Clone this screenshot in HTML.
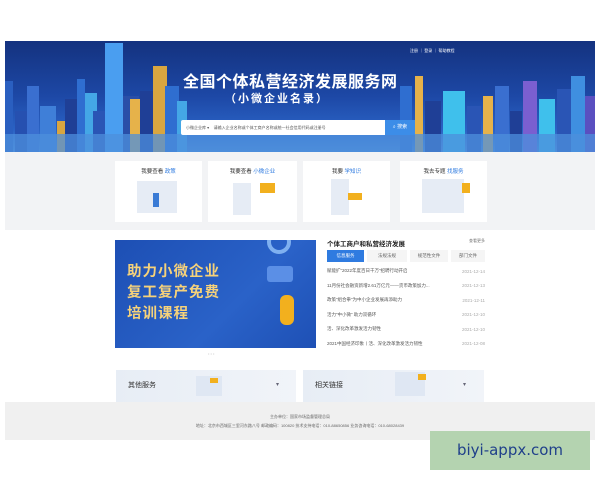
<!DOCTYPE html>
<html><head><meta charset="utf-8"><style>
*{margin:0;padding:0;box-sizing:border-box}
body{width:600px;height:480px;background:#fff;position:relative;overflow:hidden;font-family:"Liberation Sans","Noto Sans CJK SC",sans-serif}
.abs{position:absolute}
.banner{left:5px;top:41px;width:590px;height:111px;background:linear-gradient(180deg,#14327f 0%,#1d48a6 50%,#2a62c4 80%,#4b8ad6 100%);overflow:hidden}
.gray{left:5px;top:152px;width:590px;height:78px;background:#f2f3f5}
.card{top:161px;height:61px;background:#fff}
.card .t{position:absolute;top:6px;width:100%;text-align:center;font-size:5.5px;color:#333}
.card .t b{color:#2f7be0;font-weight:normal}
.news{left:327px;top:238px;width:158px}
.row{display:flex;justify-content:space-between;font-size:4.5px;color:#555;height:14.5px;align-items:center}
.row span:last-child{color:#aaa}
.foot{left:5px;top:402px;width:590px;height:38px;background:#f0f0f0;font-size:4px;color:#666;text-align:center}
</style></head><body>
<div class="abs banner">
 <svg width="590" height="111" style="position:absolute;left:0;top:0">
  <g fill="#2650b0">
   <rect x="0" y="40" width="8" height="71" fill="#2a5fc0"/><rect x="10" y="70" width="14" height="41"/><rect x="22" y="45" width="12" height="66" fill="#3a6fd0"/>
   <rect x="35" y="65" width="16" height="46" fill="#3f7fd8"/><rect x="52" y="80" width="12" height="31" fill="#d9a640"/>
   <rect x="60" y="58" width="12" height="53" fill="#1f3f96"/><rect x="72" y="38" width="8" height="73" fill="#2f6ed0"/>
   <rect x="80" y="52" width="12" height="59" fill="#44a7e6"/><rect x="88" y="70" width="12" height="41" fill="#2a55b5"/>
   <rect x="100" y="2" width="18" height="109" fill="#4a9ef0"/><rect x="118" y="55" width="16" height="56" fill="#2a4fa8"/>
   <rect x="125" y="58" width="10" height="53" fill="#e6b24a"/><rect x="135" y="50" width="14" height="61" fill="#1f3f96"/>
   <rect x="148" y="25" width="14" height="86" fill="#d9a640"/><rect x="160" y="45" width="14" height="66" fill="#2f6ed0"/>
   <rect x="172" y="60" width="10" height="51" fill="#44a7e6"/>
   <rect x="395" y="45" width="12" height="66" fill="#2f6ed0"/><rect x="410" y="35" width="8" height="76" fill="#e6b24a"/>
   <rect x="420" y="60" width="16" height="51" fill="#1f3f96"/><rect x="438" y="50" width="22" height="61" fill="#3fc0ec"/>
   <rect x="462" y="65" width="14" height="46" fill="#2a55b5"/><rect x="478" y="55" width="10" height="56" fill="#e6b24a"/>
   <rect x="490" y="45" width="14" height="66" fill="#3a6fd0"/><rect x="505" y="70" width="12" height="41" fill="#1f3f96"/>
   <rect x="518" y="40" width="14" height="71" fill="#7a5fd0"/><rect x="534" y="58" width="16" height="53" fill="#3fc0ec"/>
   <rect x="552" y="48" width="14" height="63" fill="#2a55b5"/><rect x="566" y="35" width="14" height="76" fill="#3f8fe0"/>
   <rect x="580" y="55" width="10" height="56" fill="#5a4fc0"/>
  </g>
  <rect x="0" y="93" width="590" height="18" fill="#4d8fdc" opacity=".75"/>
 </svg>
 <div class="abs" style="left:405px;top:7px;font-size:4px;color:#fff">注册 ｜ 登录 ｜ 帮助教程</div>
 <div class="abs" style="left:178px;top:27px;font-size:16px;font-weight:bold;color:#fff;letter-spacing:.5px">全国个体私营经济发展服务网</div>
 <div class="abs" style="left:220px;top:49px;font-size:11px;font-weight:bold;color:#fff;letter-spacing:2px">（小微企业名录）</div>
 <div class="abs" style="left:176px;top:79px;width:204px;height:15px;background:#fff;border-radius:2px 0 0 2px;font-size:4px;color:#555;line-height:15px;padding-left:5px">小微企业库 ▾ &nbsp;&nbsp; 请输入企业名称或个体工商户名称或统一社会信用代码或注册号</div>
 <div class="abs" style="left:380px;top:79px;width:30px;height:15px;background:#3c8de8;font-size:5px;color:#fff;line-height:15px;text-align:center">⌕ 搜索</div>
</div>
<div class="abs gray"></div>
<div class="abs card" style="left:115px;width:87px"><div class="t">我要查看 <b>政策</b></div><div class="abs" style="left:22px;top:20px;width:40px;height:32px;background:#e6ecf5"></div><div class="abs" style="left:38px;top:32px;width:6px;height:14px;background:#3a7bd5"></div></div>
<div class="abs card" style="left:208px;width:89px"><div class="t">我要查看 <b>小微企业</b></div><div class="abs" style="left:25px;top:22px;width:18px;height:32px;background:#e6ecf5"></div><div class="abs" style="left:52px;top:22px;width:15px;height:10px;background:#f2b01e"></div></div>
<div class="abs card" style="left:303px;width:87px"><div class="t">我要 <b>学知识</b></div><div class="abs" style="left:28px;top:18px;width:18px;height:36px;background:#e6ecf5"></div><div class="abs" style="left:45px;top:32px;width:14px;height:7px;background:#f2b01e"></div></div>
<div class="abs card" style="left:400px;width:87px"><div class="t">我去专题 <b>找服务</b></div><div class="abs" style="left:22px;top:18px;width:42px;height:34px;background:#e6ecf5"></div><div class="abs" style="left:62px;top:22px;width:8px;height:10px;background:#f2b01e"></div></div>

<div class="abs" style="left:115px;top:240px;width:201px;height:108px;background:linear-gradient(135deg,#1d4fb4,#2a62c8 60%,#1e50b5);overflow:hidden">
 <div class="abs" style="left:12px;top:22px;font-size:14.5px;font-weight:bold;color:#f6d27a;line-height:21px;letter-spacing:1px">助力小微企业<br>复工复产免费<br>培训课程</div>
 <div class="abs" style="left:152px;top:26px;width:26px;height:16px;background:#5b8fe6;border-radius:3px"></div>
 <div class="abs" style="left:165px;top:55px;width:14px;height:30px;background:#f2b01e;border-radius:6px"></div>
 <div class="abs" style="left:152px;top:-10px;width:24px;height:24px;border:4px solid #7fb0f0;border-radius:50%"></div>
</div>
<div class="abs" style="left:208px;top:351px;font-size:4px;color:#ccc">• • •</div>
<div class="abs news">
 <div style="display:flex;justify-content:space-between;font-size:6.5px;font-weight:bold;color:#222;height:10px"><span>个体工商户和私营经济发展</span><span style="font-size:4px;font-weight:normal;color:#777">查看更多</span></div>
 <div style="display:flex;height:12px;font-size:4.5px;color:#666;margin-top:2px;margin-bottom:2px">
  <div style="width:37px;background:#2f7be0;color:#fff;text-align:center;line-height:12px">信息服务</div>
  <div style="width:40px;background:#f5f5f5;text-align:center;line-height:12px;margin-left:3px">法规法规</div>
  <div style="width:38px;background:#f5f5f5;text-align:center;line-height:12px;margin-left:3px">规范性文件</div>
  <div style="width:34px;background:#f5f5f5;text-align:center;line-height:12px;margin-left:3px">部门文件</div>
 </div>
 <div class="row"><span>赋能扩“2022年度百日千万”招聘行动开启</span><span>2021-12-14</span></div>
 <div class="row"><span>11月份社会融资新增2.61万亿元——货币政策加力...</span><span>2021-12-13</span></div>
 <div class="row"><span>政策“组合拳”为中小企业发展再添助力</span><span>2021-12-11</span></div>
 <div class="row"><span>活力“中小微” 助力双循环</span><span>2021-12-10</span></div>
 <div class="row"><span>活、深化改革激发活力韧性</span><span>2021-12-10</span></div>
 <div class="row"><span>2021中国经济印象丨活、深化改革激发活力韧性</span><span>2021-12-08</span></div>
</div>
<div class="abs" style="left:116px;top:370px;width:180px;height:32px;background:linear-gradient(90deg,#e7edf5,#f1f4f9);font-size:7px;color:#333">
 <div class="abs" style="left:12px;top:10px">其他服务</div><div class="abs" style="left:80px;top:6px;width:26px;height:20px;background:#dfe7f3"></div><div class="abs" style="left:94px;top:8px;width:8px;height:5px;background:#f2b01e"></div><div class="abs" style="left:160px;top:11px;font-size:6px;color:#667">▾</div>
</div>
<div class="abs" style="left:303px;top:370px;width:181px;height:32px;background:linear-gradient(90deg,#e7edf5,#f1f4f9);font-size:7px;color:#333">
 <div class="abs" style="left:12px;top:10px">相关链接</div><div class="abs" style="left:92px;top:2px;width:30px;height:24px;background:#dfe7f3"></div><div class="abs" style="left:115px;top:4px;width:8px;height:6px;background:#f2b01e"></div><div class="abs" style="left:160px;top:11px;font-size:6px;color:#667">▾</div>
</div>
<div class="abs foot"><div style="margin-top:12px">主办单位：国家市场监督管理总局</div><div style="margin-top:3px">地址：北京市西城区三里河东路八号 邮政编码：100820 技术支持电话：010-88650856 业务咨询电话：010-68028439</div></div>
<div class="abs" style="left:430px;top:431px;width:160px;height:39px;background:#b4d3b0;color:#1f3f8a;font-size:15px;text-align:center;line-height:39px;font-family:'DejaVu Sans',sans-serif">biyi-appx.com</div>
</body></html>
